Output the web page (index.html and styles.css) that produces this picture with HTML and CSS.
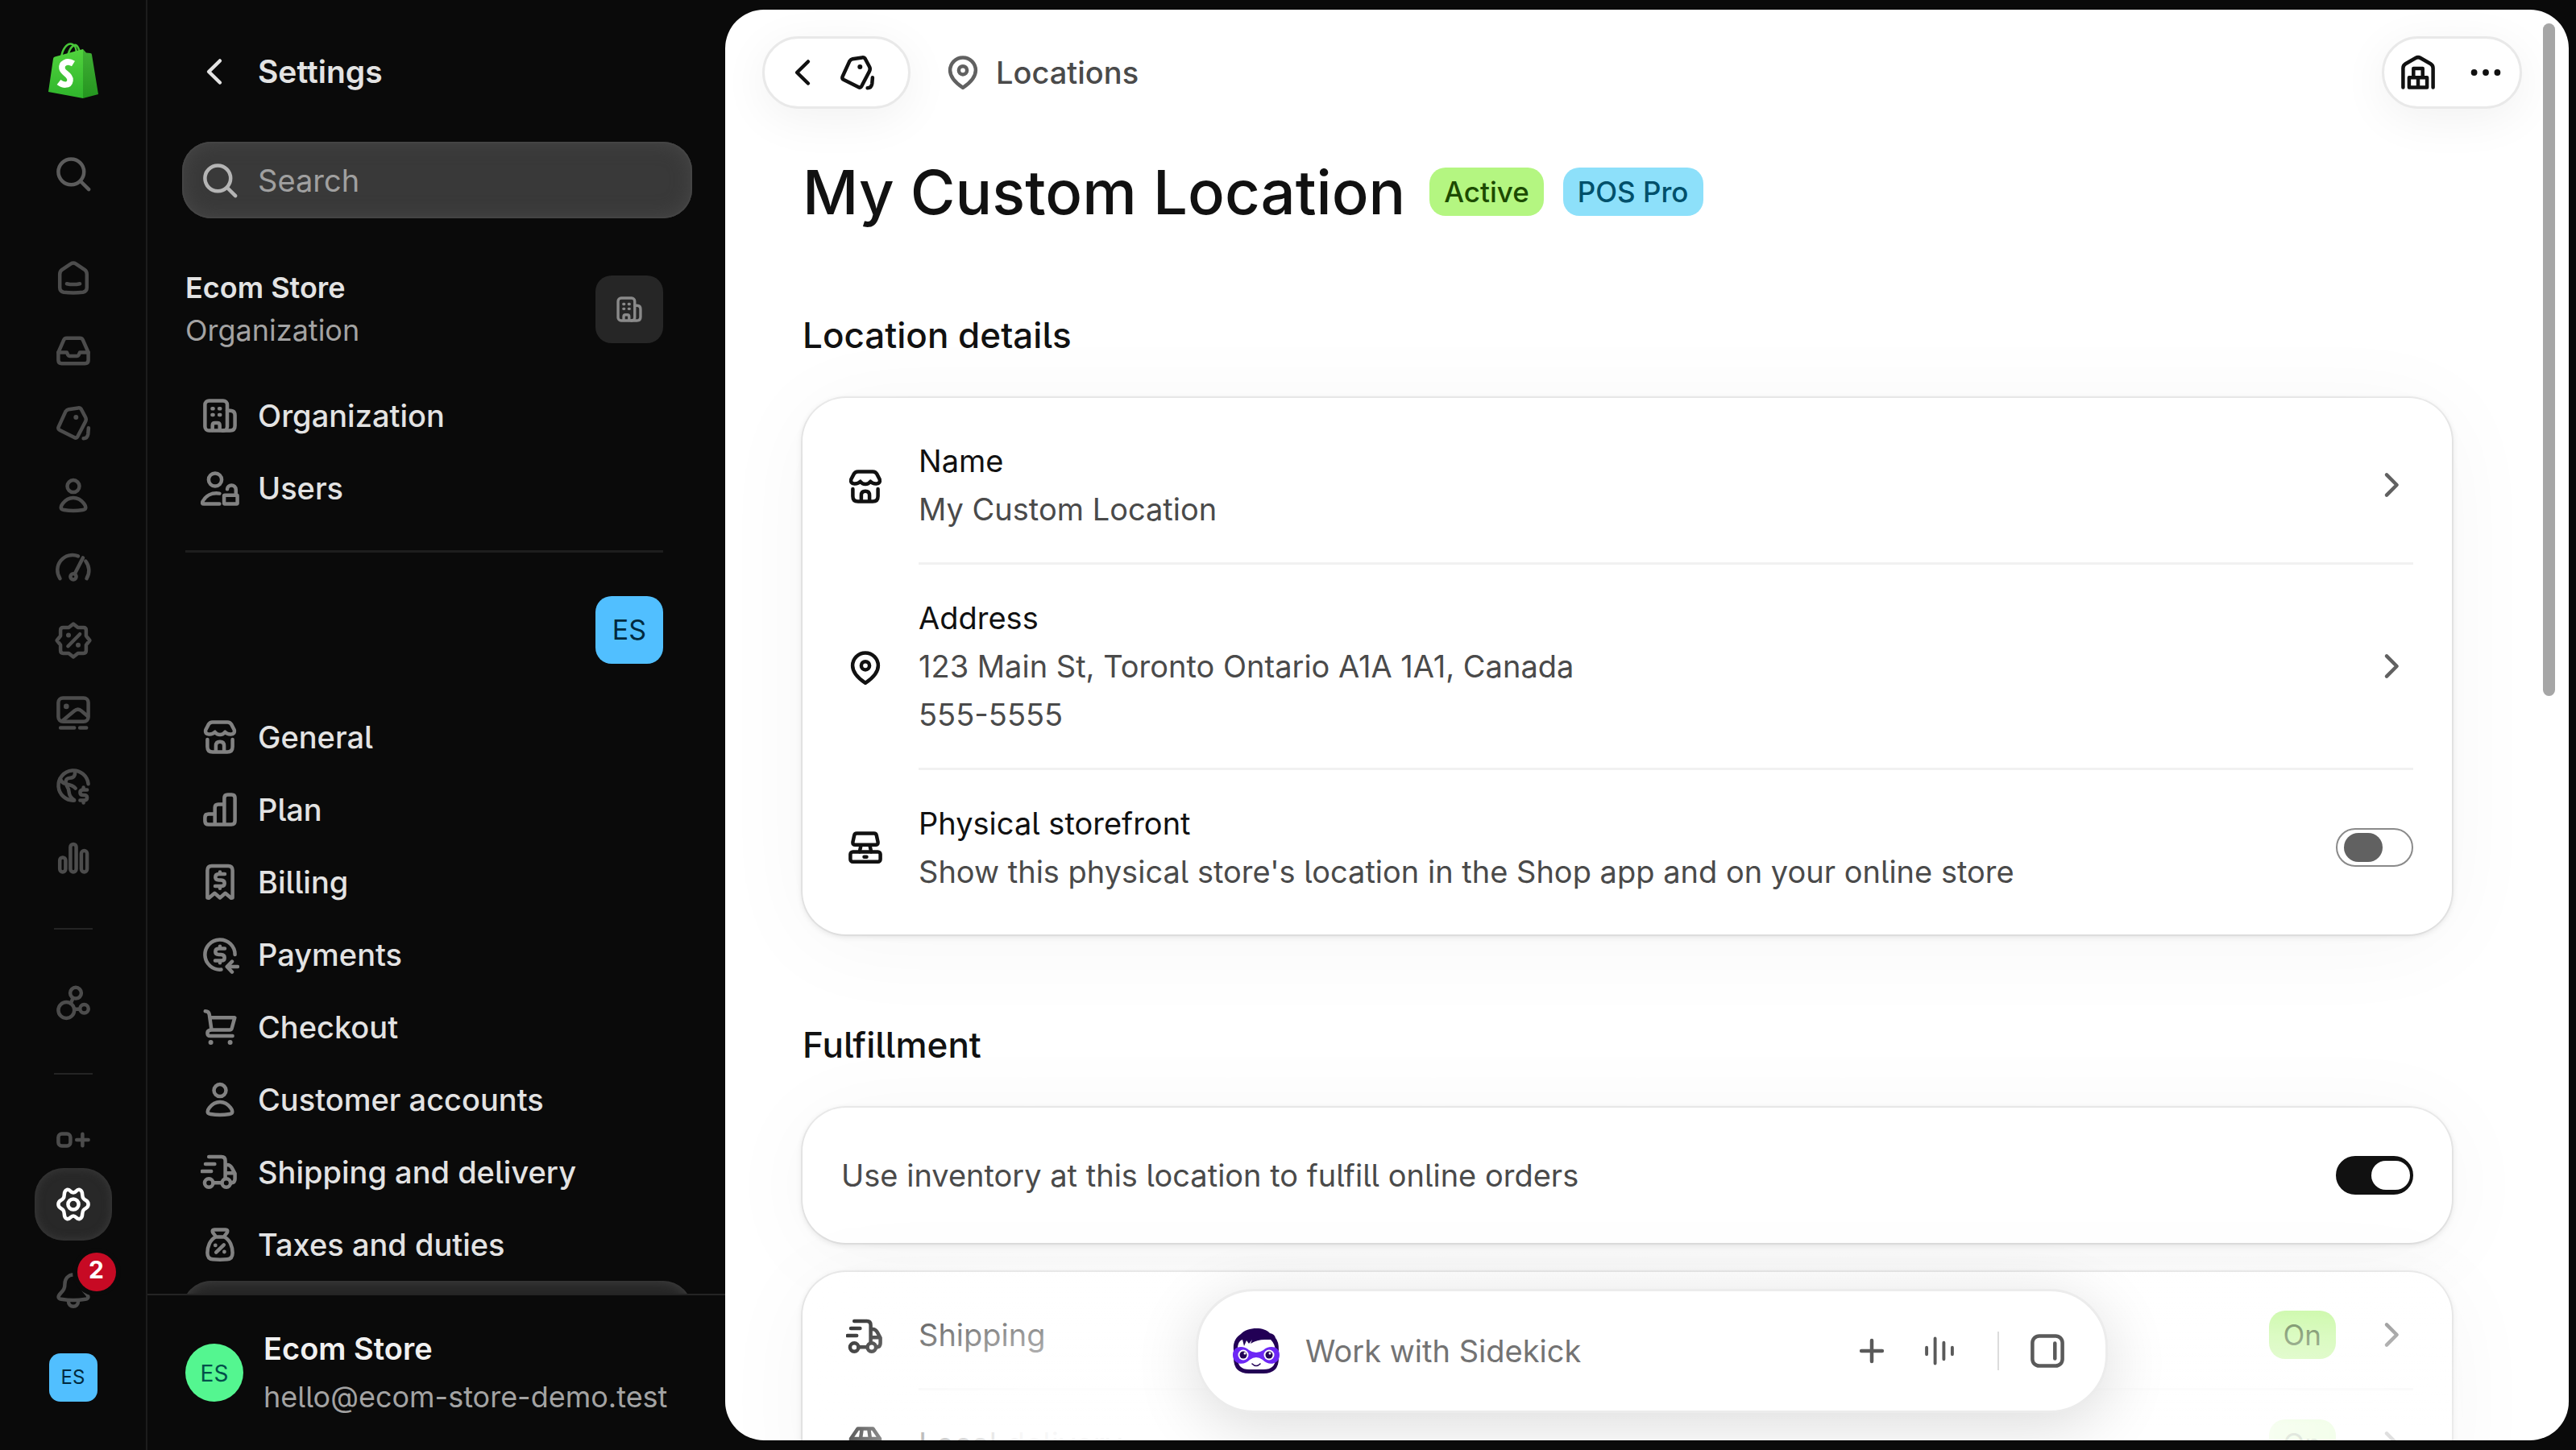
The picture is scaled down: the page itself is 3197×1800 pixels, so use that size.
FILE: index.html
```html
<!DOCTYPE html>
<html lang="en">
<head>
<meta charset="utf-8">
<title>My Custom Location · Locations · Settings</title>
<link rel="stylesheet" href="styles.css">
</head>
<body>
<svg class="sprite" aria-hidden="true">
  <symbol id="i-search" viewBox="0 0 16 16"><circle cx="7.1" cy="7.1" r="5.3"/><path d="M11 11l3.4 3.4"/></symbol>
  <symbol id="i-home" viewBox="0 0 16 16"><path d="M6.9 2.2L3.3 4.6Q2.4 5.3 2.4 6.5V12Q2.4 13.6 4 13.9Q8 14.4 12 13.9Q13.6 13.6 13.6 12V6.5Q13.6 5.3 12.7 4.6L9.1 2.2Q8 1.5 6.9 2.2Z"/><path d="M5.3 10.4Q8 11 10.7 10.4"/></symbol>
  <symbol id="i-inbox" viewBox="0 0 16 16"><path d="M4 3.8Q4.3 2.9 5.2 2.9H10.8Q11.7 2.9 12 3.8L14.2 8.8V12Q14.2 13.4 12.8 13.4H3.2Q1.8 13.4 1.8 12V8.8Z"/><path d="M1.8 8.8H5.3L5.8 9.9Q6 10.3 6.4 10.3H9.6Q10 10.3 10.2 9.9L10.7 8.8H14.2"/></symbol>
  <symbol id="i-tag" viewBox="0 0 16 16"><path d="M4.8 3.3Q5.3 2.5 6 2.4L10 1.8Q10.9 1.7 11.3 2.4L13 5.6Q13.5 6.5 13 7.5L9.8 13.6Q9.3 14.5 8.4 14L2.4 11Q1.5 10.5 1.9 9.6Z"/><path d="M14.3 10.1L14.1 12.6Q13.8 14.4 12.2 14.4"/><circle class="dot" cx="9.1" cy="5.7" r="1"/></symbol>
  <symbol id="i-person" viewBox="0 0 16 16"><circle cx="8" cy="4.2" r="2.5"/><path d="M2.9 13Q2.9 12.3 3.6 11.4Q5.4 9 8 9Q10.6 9 12.4 11.4Q13.1 12.3 13.1 13Q13.1 13.8 11.9 14Q8 14.6 4.1 14Q2.9 13.8 2.9 13Z"/></symbol>
  <symbol id="i-gauge" viewBox="0 0 16 16"><path d="M2.5 12.4A6.25 6.25 0 0 1 10 3.1"/><path d="M13.1 5.2A6.25 6.25 0 0 1 13.5 12.4"/><path d="M12 3.8L8.6 10.4"/><circle cx="8" cy="11.6" r="1.2"/></symbol>
  <symbol id="i-discount" viewBox="0 0 16 16"><path d="M8 1.2L9.9 2.7H12.2Q13.3 2.7 13.3 3.8V6.1L14.8 8L13.3 9.9V12.2Q13.3 13.3 12.2 13.3H9.9L8 14.8L6.1 13.3H3.8Q2.7 13.3 2.7 12.2V9.9L1.2 8L2.7 6.1V3.8Q2.7 2.7 3.8 2.7H6.1Z"/><path d="M5.8 10.4L10.7 5.4"/><circle class="dot" cx="6" cy="5.8" r="1"/><circle class="dot" cx="10" cy="9.9" r="1"/></symbol>
  <symbol id="i-image" viewBox="0 0 16 16"><rect x="1.8" y="1.8" width="12.4" height="9.8" rx="1.9"/><path d="M3.6 11.2L8.4 7.2Q9.9 5.9 11.4 7.2L14 9.4M2.7 14.2H8.4M10.7 14.2H13.4"/><circle class="dot" cx="5.1" cy="5.3" r="1.1"/></symbol>
  <symbol id="i-globe" viewBox="0 0 16 16"><path d="M14.2 7.4A6.2 6.2 0 1 0 8.4 14.2"/><path d="M2.6 5.2Q3.5 7.4 4.9 7.2Q4.6 4.9 6.7 4.9Q8.9 4.9 8.7 2.2M4.9 7.4Q7.8 7.9 8.9 9.2M5.2 8Q6.2 9.4 6.3 11.2Q6.4 12.6 8.3 14"/><path d="M13.7 9.8H12.1Q10.8 9.8 10.8 10.9T12.1 12H12.4Q13.7 12 13.7 13.1T12.4 14.2H10.8M12.2 8.8V9.8M12.2 14.2V15.2"/></symbol>
  <symbol id="i-bars" viewBox="0 0 16 16"><rect x="2.4" y="7.8" width="2.4" height="6" rx="1.2"/><rect x="6.8" y="2.3" width="2.4" height="11.5" rx="1.2"/><rect x="11.3" y="5" width="2.4" height="8.8" rx="1.2"/></symbol>
  <symbol id="i-apps" viewBox="0 0 16 16"><circle cx="5.1" cy="11" r="3.3"/><circle cx="9" cy="3.9" r="2.3"/><circle cx="12.5" cy="10.4" r="1.75"/><path d="M7.9 6L6.9 8.2M8.4 10.6H10.6"/></symbol>
  <symbol id="i-add" viewBox="0 0 16 16"><rect x="1.8" y="5.5" width="5" height="5" rx="1.4"/><path d="M9.4 8H14.2M11.8 5.6V10.4"/></symbol>
  <symbol id="i-gear" viewBox="0 0 16 16"><path d="M8 3.2C9.3 3.2 9.1 1.6 10.7 2C12.4 2.6 11.2 4.4 12.2 5.6C12.9 6.6 14.2 6.3 14.2 8C14.2 9.7 12.9 9.4 12.2 10.4C11.2 11.6 12.4 13.4 10.7 14C9.1 14.4 9.3 12.8 8 12.8C6.7 12.8 6.9 14.4 5.3 14C3.6 13.4 4.8 11.6 3.8 10.4C3.1 9.4 1.8 9.7 1.8 8C1.8 6.3 3.1 6.6 3.8 5.6C4.8 4.4 3.6 2.6 5.3 2C6.9 1.6 6.7 3.2 8 3.2Z"/><circle cx="8" cy="8" r="2.2"/></symbol>
  <symbol id="i-bell" viewBox="0 0 16 16"><path d="M8 1.4C5.8 1.6 4.6 3.2 4.5 5.1C4.5 7.1 4 7.8 2.6 9.3C1.5 10.5 1.6 11.4 3 11.6C6.5 12.2 9.5 12.2 13 11.6C14.4 11.4 14.5 10.5 13.4 9.3C12 7.8 11.5 7.1 11.5 5.1C11.4 3.2 10.2 1.6 8 1.4Z"/><path d="M6 12.2V12.6A2 2 0 0 0 10 12.6V12.2"/></symbol>
  <symbol id="i-building" viewBox="0 0 16 16"><rect x="1.8" y="1.8" width="9.2" height="12.4" rx="1.7"/><path d="M11 5.9H12.2Q14.2 5.9 14.2 7.9V12.2Q14.2 14.2 12.2 14.2H9M4.9 14V12Q4.9 11 5.9 11H6.9Q7.9 11 7.9 12V14M4.8 5.1H5.2M7.7 5.1H8.1M4.8 7.7H5.2M7.7 7.7H8.1"/></symbol>
  <symbol id="i-users" viewBox="0 0 16 16"><circle cx="6" cy="4.5" r="2.7"/><path d="M7.8 10.2C4.5 9.7 2 11.2.8 13.6Q.4 14.5 1.3 14.5H7.8M11 8.4C11 6.3 14.6 6.3 14.6 8.7V10.9"/><rect x="9.7" y="10.9" width="5.5" height="3.6" rx=".3"/></symbol>
  <symbol id="i-store" viewBox="0 0 16 16"><path d="M4.9 1.8H11.1Q12.2 1.8 12.7 2.7L13.9 5Q14.3 6.7 12.6 6.8Q11 6.9 10.1 5.9Q9.3 7 8 7Q6.7 7 5.9 5.9Q5 6.9 3.4 6.8Q1.7 6.7 2.1 5L3.3 2.7Q3.8 1.8 4.9 1.8Z"/><path d="M2.8 9V12Q2.8 14.2 5 14.2H11Q13.2 14.2 13.2 12V9M6.3 14V11.6Q6.3 9.9 8 9.9Q9.7 9.9 9.7 11.6V14"/></symbol>
  <symbol id="i-plan" viewBox="0 0 16 16"><path d="M14.2 3.2V12.7Q14.2 14.2 12.7 14.2H3.3Q1.8 14.2 1.8 12.7V11.3Q1.8 9.8 3.3 9.8H5.9V7.2Q5.9 5.8 7.3 5.8H9.8V3.2Q9.8 1.8 11.2 1.8H12.8Q14.2 1.8 14.2 3.2ZM5.9 9.8V14.2M9.8 5.8V14.2"/></symbol>
  <symbol id="i-billing" viewBox="0 0 16 16"><path d="M2.8 14.5V3.2Q2.8 1.3 4.6 1.3H11.4Q13.2 1.3 13.2 3.2V14.5L12.6 14.6L10.2 12.6L8 14.5L5.8 12.6L3.4 14.6Z"/><path d="M10 4.7H7.6Q6.1 4.7 6.1 6Q6.1 7.1 7.6 7.2H8.4Q9.9 7.3 9.9 8.5Q9.9 9.7 8.4 9.7H6M8 3.8V4.7M8 9.7V10.6"/></symbol>
  <symbol id="i-payments" viewBox="0 0 16 16"><path d="M14.2 8A6.2 6.2 0 1 0 8.5 14.2"/><path d="M10 5.5H7.6Q6.1 5.5 6.1 6.8Q6.1 7.9 7.6 8H8.4Q9.9 8.1 9.9 9.3Q9.9 10.5 8.4 10.5H6M8 4.6V5.5M8 10.5V11.4M10.9 13H15.3M13 10.9L10.9 13L13 15.2"/></symbol>
  <symbol id="i-cart" viewBox="0 0 16 16"><path d="M1.9 1.4Q3.4 1.4 3.6 2.8L4.5 9.2H12Q12.7 9.2 12.9 8.5L14.1 4.1H4M4.5 9.2Q2.8 9.3 2.8 10.4Q2.8 11.7 4 11.7H13.2"/><circle class="dot" cx="4.2" cy="14.3" r="1"/><circle class="dot" cx="12.2" cy="14.3" r="1"/></symbol>
  <symbol id="i-truck" viewBox="0 0 16 16"><path d="M3.4 1.7H8.6Q10.2 1.7 10.2 3.4V10.6M2 4.7H5.8M.6 7.7H4.4M10.3 5H11Q12.2 5 12.9 6.2L14.2 8.6V10.8Q14.2 12.3 12.6 12.5M10.3 8.4H14M5.2 12.4H8.7"/><circle cx="3.4" cy="12.5" r="1.75"/><circle cx="10.6" cy="12.5" r="1.75"/></symbol>
  <symbol id="i-tax" viewBox="0 0 16 16"><path d="M6.2 4.8C3.8 6 2.8 9 2.8 11.4Q2.8 13.9 5 14.1Q8 14.4 11 14.1Q13.2 13.9 13.2 11.4C13.2 9 12.2 6 9.8 4.8ZM6.2 4.6L5 2.9Q4.6 1.8 5.7 1.8H10.3Q11.4 1.8 11 2.9L9.8 4.6M6.4 11.2L9.6 8.1"/><circle class="dot" cx="6.1" cy="8.3" r=".8"/><circle class="dot" cx="9.8" cy="11" r=".8"/></symbol>
  <symbol id="i-pin" viewBox="0 0 16 16"><path d="M8 14.3Q2.7 10.8 2.7 7.1A5.3 5.3 0 0 1 13.3 7.1Q13.3 10.8 8 14.3Z"/><circle cx="8" cy="7.1" r="1.7"/></symbol>
  <symbol id="i-pos" viewBox="0 0 16 16"><path d="M4.4 2.2H11.6Q12.4 2.2 12.6 3L13.2 5.8Q13.3 6.9 12.2 6.9H3.8Q2.7 6.9 2.8 5.8L3.4 3Q3.6 2.2 4.4 2.2ZM6.2 7L5.6 9.8M9.8 7L10.4 9.8M7.5 11.9H8.5"/><rect x="1.8" y="9.8" width="12.4" height="4.1" rx="1"/></symbol>
  <symbol id="i-warehouse" viewBox="0 0 16 16"><path d="M1.8 14.2V6.2Q1.8 5 2.8 4.4L7 2Q8 1.4 9 2L13.2 4.4Q14.2 5 14.2 6.2V14.2"/><path d="M6.1 6.3H9.9V10.1H6.1ZM4.3 10.1H8V14.2H4.3ZM8 10.1H11.7V14.2H8Z"/></symbol>
  <symbol id="i-package" viewBox="0 0 16 16"><path d="M4.9 1.8H11.1L14 6V12.5Q14 14.2 12.3 14.2H3.7Q2 14.2 2 12.5V6ZM2 6H14M6.6 1.8L6 6V9H10V6L9.4 1.8"/></symbol>
  <symbol id="i-left" viewBox="0 0 16 16"><path d="M10.3 3.5L5.7 8L10.3 12.5"/></symbol>
  <symbol id="i-right" viewBox="0 0 16 16"><path d="M7 3.8L11.2 8L7 12.2"/></symbol>
  <symbol id="i-dots" viewBox="0 0 16 16"><circle class="dot" cx="3.2" cy="8" r="1.3"/><circle class="dot" cx="8" cy="8" r="1.3"/><circle class="dot" cx="12.8" cy="8" r="1.3"/></symbol>
  <symbol id="i-plus" viewBox="0 0 16 16"><path d="M8 3.7V12.3M3.7 8H12.3"/></symbol>
  <symbol id="i-voice" viewBox="0 0 16 16"><path d="M2.7 6.6V9.4M6.2 2.8V13.2M9.8 4.6V11.4M13.3 6.6V9.4"/></symbol>
  <symbol id="i-panel" viewBox="0 0 16 16"><rect x="1.8" y="1.8" width="12.4" height="12.4" rx="2.8"/><path d="M11.1 4.8V11.2"/></symbol>
</svg>

<div class="app">
  <nav class="rail" aria-label="Main">
    <a class="rail-logo" href="#" aria-label="Home">
      <svg width="62" height="69" viewBox="0 0 62 69" aria-hidden="true">
        <defs>
          <linearGradient id="bag" x1="0" y1="0" x2="0" y2="1"><stop offset="0" stop-color="#51d33d"/><stop offset="1" stop-color="#2fb52c"/></linearGradient>
          <linearGradient id="side" x1="0" y1="0" x2="0" y2="1"><stop offset="0" stop-color="#41b035"/><stop offset="1" stop-color="#24951f"/></linearGradient>
        </defs>
        <path d="M16 19C17 8 23 1 28 1.500C33 2 35 8 35 14M24 17C26 7 31 2 34 3C37 4 38 8 39 12" fill="none" stroke="#49c739" stroke-width="2.500"/>
        <path d="M6 20Q6 18 8 17.500L43 8V69L0 61Z" fill="url(#bag)"/>
        <path d="M43 8L47 12.500L52 13Q54 13 54 15L62 64L43 69Z" fill="url(#side)"/>
        <path d="M31 26C23 21 16 26 17 32C18 38 28 40 27 47C26 54 18 53 13 49" fill="none" stroke="#fff" stroke-width="7.500"/>
      </svg>
    </a>
    <a class="rail-item rail-search" href="#" aria-label="Search"><svg class="icon"><use href="#i-search"/></svg></a>
    <a class="rail-item" href="#" aria-label="Overview"><svg class="icon"><use href="#i-home"/></svg></a>
    <a class="rail-item" href="#" aria-label="Orders"><svg class="icon"><use href="#i-inbox"/></svg></a>
    <a class="rail-item" href="#" aria-label="Products"><svg class="icon"><use href="#i-tag"/></svg></a>
    <a class="rail-item" href="#" aria-label="Customers"><svg class="icon"><use href="#i-person"/></svg></a>
    <a class="rail-item" href="#" aria-label="Marketing"><svg class="icon"><use href="#i-gauge"/></svg></a>
    <a class="rail-item" href="#" aria-label="Discounts"><svg class="icon"><use href="#i-discount"/></svg></a>
    <a class="rail-item" href="#" aria-label="Content"><svg class="icon"><use href="#i-image"/></svg></a>
    <a class="rail-item" href="#" aria-label="Markets"><svg class="icon"><use href="#i-globe"/></svg></a>
    <a class="rail-item" href="#" aria-label="Analytics"><svg class="icon"><use href="#i-bars"/></svg></a>
    <hr class="rail-rule">
    <a class="rail-item" href="#" aria-label="Apps"><svg class="icon"><use href="#i-apps"/></svg></a>
    <hr class="rail-rule">
    <button class="rail-item rail-add" type="button" aria-label="Add"><svg class="icon"><use href="#i-add"/></svg></button>
    <a class="rail-item rail-active" href="#" aria-label="Settings"><svg class="icon"><use href="#i-gear"/></svg></a>
    <button class="rail-item rail-bell" type="button" aria-label="Notifications"><svg class="icon"><use href="#i-bell"/></svg><span class="count">2</span></button>
    <button class="rail-store" type="button">ES</button>
  </nav>

  <aside class="panel">
    <div class="panel-scroll">
      <header class="panel-head">
        <button class="plain" type="button" aria-label="Back"><svg class="icon"><use href="#i-left"/></svg></button>
        <h2>Settings</h2>
      </header>
      <label class="search">
        <svg class="icon"><use href="#i-search"/></svg>
        <input type="search" placeholder="Search" aria-label="Search settings">
      </label>
      <div class="owner">
        <div><strong>Ecom Store</strong><span>Organization</span></div>
        <span class="tile"><svg class="icon icon-small"><use href="#i-building"/></svg></span>
      </div>
      <ul class="nav">
        <li><a href="#"><svg class="icon"><use href="#i-building"/></svg>Organization</a></li>
        <li><a href="#"><svg class="icon"><use href="#i-users"/></svg>Users</a></li>
      </ul>
      <hr class="panel-rule">
      <div class="store-tile"><span class="tile tile-blue">ES</span></div>
      <ul class="nav">
        <li><a href="#"><svg class="icon"><use href="#i-store"/></svg>General</a></li>
        <li><a href="#"><svg class="icon"><use href="#i-plan"/></svg>Plan</a></li>
        <li><a href="#"><svg class="icon"><use href="#i-billing"/></svg>Billing</a></li>
        <li><a href="#"><svg class="icon"><use href="#i-payments"/></svg>Payments</a></li>
        <li><a href="#"><svg class="icon"><use href="#i-cart"/></svg>Checkout</a></li>
        <li><a href="#"><svg class="icon"><use href="#i-person"/></svg>Customer accounts</a></li>
        <li><a href="#"><svg class="icon"><use href="#i-truck"/></svg>Shipping and delivery</a></li>
        <li><a href="#"><svg class="icon"><use href="#i-tax"/></svg>Taxes and duties</a></li>
        <li class="current"><a href="#" aria-label="Locations" aria-current="page"></a></li>
      </ul>
    </div>
    <footer class="account">
      <span class="avatar">ES</span>
      <div><strong>Ecom Store</strong><span>hello@ecom-store-demo.test</span></div>
    </footer>
  </aside>

  <main class="main">
    <header class="topbar">
      <div class="pill pill-left">
        <button class="plain" type="button" aria-label="Back"><svg class="icon"><use href="#i-left"/></svg></button>
        <button class="plain" type="button" aria-label="Products"><svg class="icon"><use href="#i-tag"/></svg></button>
      </div>
      <a class="crumb" href="#"><svg class="icon"><use href="#i-pin"/></svg>Locations</a>
      <div class="pill pill-right">
        <button class="plain" type="button" aria-label="Inventory"><svg class="icon"><use href="#i-warehouse"/></svg></button>
        <button class="plain" type="button" aria-label="More actions"><svg class="icon"><use href="#i-dots"/></svg></button>
      </div>
    </header>

    <div class="content">
      <div class="title">
        <h1>My Custom Location</h1>
        <span class="badge badge-green">Active</span>
        <span class="badge badge-blue">POS Pro</span>
      </div>

      <h2>Location details</h2>
      <section class="card">
        <a class="row" href="#">
          <svg class="icon"><use href="#i-store"/></svg>
          <div class="row-body">
            <div><h3>Name</h3><p>My Custom Location</p></div>
            <svg class="icon chevron"><use href="#i-right"/></svg>
          </div>
        </a>
        <a class="row" href="#">
          <svg class="icon"><use href="#i-pin"/></svg>
          <div class="row-body">
            <div><h3>Address</h3><p>123 Main St, Toronto Ontario A1A 1A1, Canada</p><p>555-5555</p></div>
            <svg class="icon chevron"><use href="#i-right"/></svg>
          </div>
        </a>
        <label class="row">
          <svg class="icon"><use href="#i-pos"/></svg>
          <span class="row-body">
            <span><span class="h3">Physical storefront</span><span class="p">Show this physical store's location in the Shop app and on your online store</span></span>
            <input class="switch" type="checkbox" role="switch">
          </span>
        </label>
      </section>

      <h2 class="fulfillment">Fulfillment</h2>
      <section class="card">
        <label class="row row-plain">
          <span class="p">Use inventory at this location to fulfill online orders</span>
          <input class="switch" type="checkbox" role="switch" checked>
        </label>
      </section>
      <section class="card">
        <a class="row" href="#">
          <svg class="icon"><use href="#i-truck"/></svg>
          <div class="row-body">
            <h3>Shipping</h3>
            <span class="badge badge-green badge-row">On</span>
            <svg class="icon chevron"><use href="#i-right"/></svg>
          </div>
        </a>
        <a class="row" href="#">
          <svg class="icon"><use href="#i-package"/></svg>
          <div class="row-body">
            <h3>Local delivery</h3>
            <span class="badge badge-green badge-row">On</span>
            <svg class="icon chevron"><use href="#i-right"/></svg>
          </div>
        </a>
      </section>
    </div>

    <div class="fade"></div>
    <div class="scrollbar"></div>

    <div class="dock">
      <form class="sidekick">
        <svg class="face" viewBox="0 0 58 58" aria-hidden="true">
          <path d="M1 28C0 18 4 12 10 8C17 0 38-2 46 7Q52 8 53 13Q57 17 57 28V38Q57 57 38 57H20Q1 57 1 38Z" fill="#220055"/>
          <path d="M6 24C7 18 9 16 12 15L14 23L17 16L20 20L24 15L22 20Q30 15 40 15H47Q52 20 53 28V38Q53 52 38 52H20Q6 52 6 38Z" fill="#fff"/>
          <path d="M0 34C0 22 14 22 20 28Q29 34 38 28C44 22 58 22 58 34C58 46 44 48 37 40Q29 34 21 40C14 48 0 46 0 34Z" fill="#6d27f5"/>
          <circle cx="13" cy="34" r="6.500" fill="#fff"/><circle cx="45" cy="34" r="6.500" fill="#fff"/>
          <circle cx="13" cy="34" r="4.500" fill="#220055"/><circle cx="45" cy="34" r="4.500" fill="#220055"/>
          <circle cx="15" cy="32" r="1.500" fill="#fff"/><circle cx="46" cy="32" r="1.500" fill="#fff"/>
          <path d="M24 45Q29 50 34 45" fill="none" stroke="#220055" stroke-width="1.600" stroke-linecap="round"/>
        </svg>
        <input type="text" placeholder="Work with Sidekick" aria-label="Work with Sidekick">
        <button class="plain" type="button" aria-label="Attach"><svg class="icon"><use href="#i-plus"/></svg></button>
        <button class="plain" type="button" aria-label="Voice"><svg class="icon icon-thin"><use href="#i-voice"/></svg></button>
        <span class="bar"></span>
        <button class="plain" type="button" aria-label="Open side panel"><svg class="icon"><use href="#i-panel"/></svg></button>
      </form>
    </div>
  </main>
</div>
</body>
</html>
```
FILE: styles.css
```css
*, *::before, *::after { box-sizing: border-box; }

body {
  margin: 0;
  background: #0a0a0a;
  color: #111;
  font: 400 38px/60px Inter, "Liberation Sans", sans-serif;
  font-feature-settings: "cv05";
}

h1, h2, h3, p, ul { margin: 0; padding: 0; }
h3 { font: inherit; }
ul { list-style: none; }
a { color: inherit; text-decoration: none; }
hr { border: 0; margin: 0; }
strong { font-weight: 600; }

button, input {
  font: inherit;
  font-feature-settings: inherit;
  color: inherit;
  border: 0;
  padding: 0;
  background: none;
}

.sprite { position: absolute; width: 0; height: 0; }

.icon {
  flex: none;
  display: block;
  width: 48px;
  height: 48px;
  overflow: visible;
  fill: none;
  stroke: currentColor;
  stroke-width: 1.5;
  stroke-linecap: round;
  stroke-linejoin: round;
}
.icon-small { width: 36px; height: 36px; }
.icon-thin { stroke-width: 1.3; }
.dot { fill: currentColor; stroke: none; }
.plain { display: block; }

.app { display: flex; height: 100vh; overflow: hidden; }

/* Icon rail */
.rail {
  flex: none;
  display: flex;
  flex-direction: column;
  align-items: center;
  width: 183px;
  padding-top: 53px;
  border-right: 2px solid #1c1c1c;
  color: #4c4c4c;
}
.rail-logo { height: 69px; }
.rail-item {
  flex: none;
  display: flex;
  align-items: center;
  justify-content: center;
  width: 96px;
  height: 90px;
}
.rail-search { margin: 49px 0 39px; color: #5c5c5c; }
.rail-rule { width: 48px; height: 2px; margin: 42px 0 46px; background: #242424; }
.rail-add { height: 70px; }
.rail-active {
  border-radius: 36px;
  background: #282828;
  box-shadow: inset 0 0 12px #3c3c3c;
  color: #fff;
}
.rail-bell { position: relative; height: 124px; }
.count {
  position: absolute;
  top: 15px;
  right: -5px;
  width: 48px;
  height: 48px;
  border-radius: 50%;
  background: #c70a24;
  box-shadow: 0 0 0 6px #0a0a0a;
  color: #fff;
  font-size: 30px;
  font-weight: 700;
  line-height: 42px;
  text-align: center;
}
.rail-store {
  width: 60px;
  height: 60px;
  margin-top: 16px;
  border-radius: 14px;
  background: #51bfff;
  color: #00293d;
  font-size: 24px;
}

/* Settings panel */
.panel {
  flex: none;
  display: flex;
  flex-direction: column;
  width: 717px;
  color: #e3e3e3;
}
.panel-scroll { flex: 1; overflow: hidden; padding: 0 41px 0 43px; }
.panel-head { display: flex; align-items: center; gap: 30px; padding: 59px 0 57px 16px; }
.panel-head h2 { font-size: 39px; font-weight: 600; }
.search {
  display: flex;
  align-items: center;
  gap: 23px;
  height: 95px;
  padding: 0 23px;
  border-radius: 36px;
  background: #393939;
  box-shadow: inset 0 0 0 2px #444, inset 0 0 24px #484848;
  color: #b5b5b5;
}
.search input { flex: 1; min-width: 0; height: 60px; outline: 0; }
.search input::placeholder { color: #a0a0a0; opacity: 1; }

.owner {
  display: flex;
  align-items: center;
  justify-content: space-between;
  margin: 60px 36px 34px 4px;
  font-size: 36px;
  line-height: 53px;
}
.owner strong, .owner div > span, .account strong, .account div > span { display: block; }
.owner div > span, .account div > span { color: #a3a3a3; }

.tile {
  display: flex;
  align-items: center;
  justify-content: center;
  width: 84px;
  height: 84px;
  border-radius: 20px;
  background: #262626;
  color: #8a8a8a;
}
.tile-blue { background: #51bfff; color: #00293d; font-size: 34px; }

.nav { color: #e3e3e3; font-weight: 500; }
.nav a { display: flex; align-items: center; gap: 23px; height: 90px; padding-left: 23px; }
.nav .icon { color: #828282; }
.current { border-radius: 36px; background: #262626; box-shadow: inset 0 0 16px #444; }
.panel-rule { height: 3px; margin: 32px 36px 54px 4px; background: #1e1e1e; }
.store-tile { display: flex; justify-content: flex-end; padding: 0 36px 46px 0; }

.account {
  display: flex;
  align-items: center;
  gap: 25px;
  height: 194px;
  padding: 0 0 0 47px;
  border-top: 2px solid #242424;
}
.avatar {
  width: 72px;
  height: 72px;
  border-radius: 50%;
  background: #54f690;
  color: #00504a;
  font-size: 28px;
  line-height: 74px;
  text-align: center;
}
.account strong { color: #f1f1f1; }
.account div > span { font-size: 36px; }

/* Main sheet */
.main {
  position: relative;
  flex: 1;
  min-width: 0;
  margin: 12px 9px 12px 0;
  border-radius: 48px;
  background: #fff;
  overflow: hidden;
}
.topbar { display: flex; align-items: center; padding: 33px 58px 0 46px; }
.pill {
  display: flex;
  align-items: center;
  justify-content: center;
  height: 90px;
  border: 3px solid #e9e9e9;
  border-radius: 45px;
  background: #fff;
  box-shadow: 0 12px 60px rgba(0, 0, 0, .06);
}
.pill-left { width: 184px; gap: 20px; padding-right: 16px; }
.pill-right { width: 174px; gap: 36px; margin-left: auto; }
.crumb {
  display: flex;
  align-items: center;
  gap: 17px;
  margin-left: 41px;
  color: #4a4a4a;
  font-weight: 500;
}
.crumb .icon { color: #616161; }

.content { padding: 55px 145px 0 96px; }
.title { display: flex; align-items: center; margin-bottom: 100px; }
.title h1 { margin-right: 30px; font-size: 76px; font-weight: 500; line-height: 96px; }
.badge {
  margin-right: 24px;
  padding: 0 18px;
  border-radius: 20px;
  font-size: 35px;
  font-weight: 500;
  line-height: 60px;
}
.badge-green { background: #b4f681; color: #1c4a00; }
.badge-blue { background: #8de0fa; color: #00506b; }
.badge-row { margin-left: auto; margin-right: 42px; font-weight: 400; }

.content h2 { margin-bottom: 48px; font-size: 44px; font-weight: 500; }
.content h2.fulfillment { margin-top: 107px; }

.card {
  padding: 12px 48px;
  border-radius: 54px;
  background: #fff;
  box-shadow: 0 0 0 2px rgba(0, 0, 0, .05), 0 2px 8px rgba(0, 0, 0, .12), 0 12px 120px rgba(0, 0, 0, .04);
}
.card + .card { margin-top: 36px; }
.row { display: flex; align-items: stretch; gap: 42px; }
.row > .icon { align-self: center; margin-left: 6px; }
.row-body {
  flex: 1;
  display: flex;
  align-items: center;
  padding: 36px 0;
}
.row:not(:last-child) .row-body { border-bottom: 3px solid #f1f1f1; }
.row-body > :first-child { flex: 1; }
.row p, .row .p { color: #4a4a4a; }
.row .p, .row .h3 { display: block; }
.row-plain { align-items: center; justify-content: space-between; padding: 42px 0; }
.chevron { margin-right: 6px; color: #616161; }

.switch {
  appearance: none;
  flex: none;
  display: flex;
  align-items: center;
  width: 96px;
  height: 48px;
  margin: 0;
  padding: 0 8px;
  border: 2px solid #8a8a8a;
  border-radius: 24px;
}
.switch::before { content: ""; width: 48px; height: 36px; border-radius: 18px; background: #616161; }
.switch:checked { justify-content: flex-end; padding: 0 2px; border-color: #111; background: #111; }
.switch:checked::before { background: #fff; }

.fade {
  position: absolute;
  left: 0;
  right: 0;
  bottom: 0;
  height: 240px;
  background: linear-gradient(to bottom, rgba(255, 255, 255, 0), rgba(255, 255, 255, .58) 46%, rgba(255, 255, 255, .97) 92%);
  mask-image: linear-gradient(to right, transparent 4%, rgba(0, 0, 0, .48) 8%, rgba(0, 0, 0, .78) 11%, #000 16%, #000 75%, rgba(0, 0, 0, .9) 85%, rgba(0, 0, 0, .8) 92%, transparent 95%);
}
.scrollbar {
  position: absolute;
  top: 17px;
  right: 17px;
  width: 15px;
  height: 47%;
  border-radius: 8px;
  background: #a6a6a6;
}

.dock {
  position: absolute;
  left: 0;
  right: 0;
  bottom: 34px;
  display: flex;
  justify-content: center;
  padding-left: 12px;
}
.sidekick {
  display: flex;
  align-items: center;
  width: 1132px;
  height: 154px;
  padding: 0 48px 0 43px;
  border: 3px solid #ececec;
  border-radius: 72px;
  background: #fff;
  box-shadow: 0 16px 80px rgba(0, 0, 0, .14);
  color: #5a5a5a;
}
.face { flex: none; width: 58px; height: 58px; margin-right: 32px; }
.sidekick input { flex: 1; min-width: 0; outline: 0; }
.sidekick input::placeholder { color: #737373; opacity: 1; }
.sidekick .plain + .plain { margin-left: 36px; }
.bar { width: 2px; height: 48px; margin: 0 36px 0 48px; background: #dcdcdc; }
```
